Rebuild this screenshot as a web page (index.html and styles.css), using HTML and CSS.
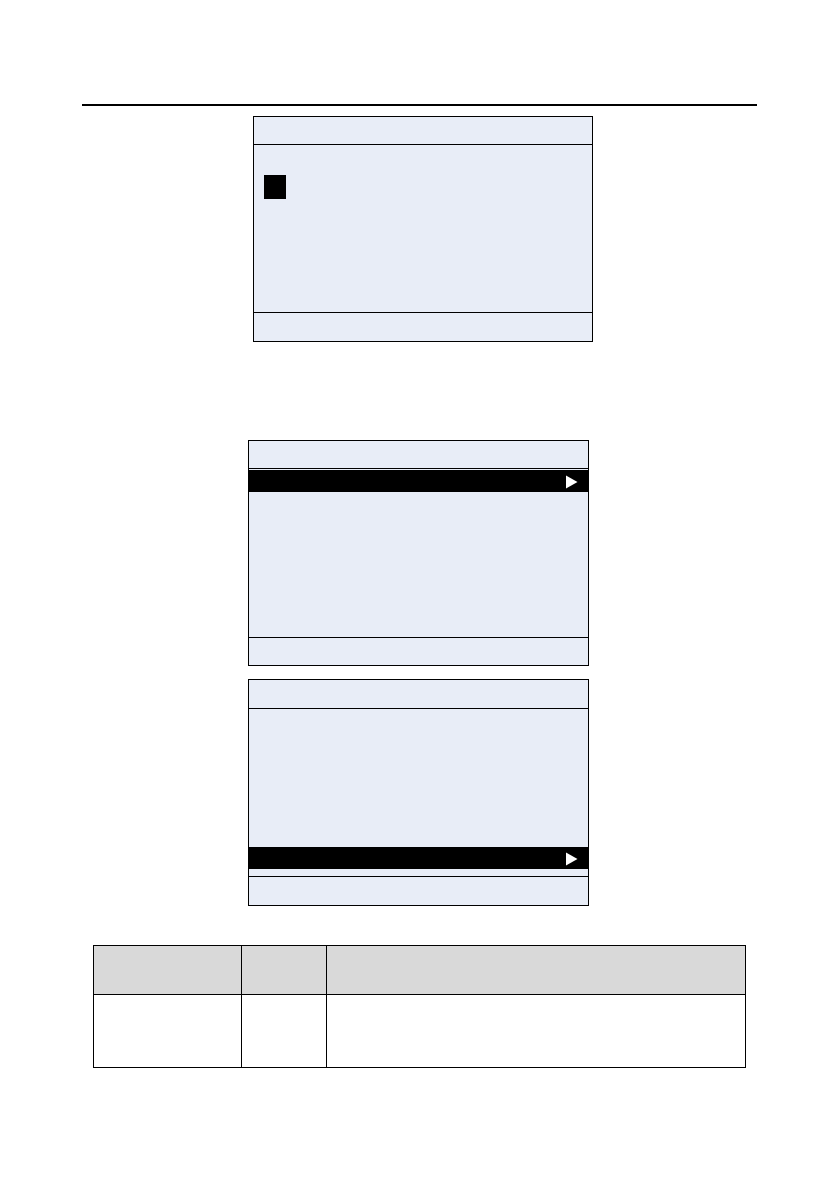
FILE: index.html
```html
<!DOCTYPE html>
<html lang="en">
<head>
<meta charset="utf-8">
<meta name="viewport" content="width=device-width, initial-scale=1">
<link rel="stylesheet" href="styles.css">
</head>
<body>
<header class="page-header"></header>
<main class="content">
  <section class="figure figure-entry">
    <div class="screen">
      <div class="screen-bar"></div>
      <div class="screen-body screen-body-entry"><div class="cursor"></div></div>
      <div class="screen-bar screen-footer"></div>
    </div>
  </section>
  <section class="figure figure-menus">
    <div class="screen screen-menu">
      <div class="screen-bar"></div>
      <div class="screen-body screen-body-first">
        <div class="selected-row">
          <svg class="arrow" viewBox="0 0 12 14" aria-hidden="true"><path d="M0 0.5L11.5 7L0 13.5Z" fill="#fff"/></svg>
        </div>
      </div>
      <div class="screen-bar screen-footer-short"></div>
    </div>
    <div class="screen screen-menu">
      <div class="screen-bar screen-bar-tall"></div>
      <div class="screen-body screen-body-last">
        <div class="selected-row">
          <svg class="arrow" viewBox="0 0 12 14" aria-hidden="true"><path d="M0 0.5L11.5 7L0 13.5Z" fill="#fff"/></svg>
        </div>
      </div>
      <div class="screen-bar screen-footer"></div>
    </div>
  </section>
  <div class="table-wrap">
    <table class="params">
      <colgroup><col class="col-name"><col class="col-range"><col></colgroup>
      <thead><tr><th></th><th></th><th></th></tr></thead>
      <tbody><tr><td></td><td></td><td></td></tr></tbody>
    </table>
  </div>
</main>
</body>
</html>
```

FILE: styles.css
```css
* {
  box-sizing: border-box;
}

body {
  margin: 0;
  padding: 0 82px 123px;
  background: #fff;
  font-family: "Liberation Sans", Arial, sans-serif;
}

.page-header {
  height: 106px;
  border-bottom: 2px solid #000;
}

.content {
  padding-top: 10px;
}

.figure {
  display: flex;
  flex-direction: column;
  align-items: center;
  gap: 13px;
}

.figure-entry {
  padding-left: 7px;
}

.figure-menus {
  padding-right: 2px;
  margin: 98px 0 39px;
}

.screen {
  width: 100%;
  max-width: 340px;
  border: 1px solid #000;
  background: #e8edf7;
}

.screen-menu {
  max-width: 341px;
}

.screen-bar {
  height: 27px;
}

.screen-bar-tall,
.screen-footer {
  height: 28px;
}

.screen-footer-short {
  height: 27px;
}

.screen-body {
  display: flex;
  flex-direction: column;
  height: 169px;
  border-top: 1px solid #000;
  border-bottom: 1px solid #000;
}

.screen-body-entry {
  padding: 30px 10px;
}

.screen-body-first {
  height: 170px;
  padding-top: 1px;
}

.screen-body-last {
  justify-content: flex-end;
  padding-bottom: 7px;
}

.cursor {
  width: 22px;
  height: 24px;
  background: #000;
}

.selected-row {
  display: flex;
  align-items: center;
  justify-content: flex-end;
  height: 22px;
  padding: 1px 10px 0 0;
  background: #000;
}

.arrow {
  width: 12px;
  height: 14px;
}

.table-wrap {
  padding: 0 11px;
}

.params {
  width: 100%;
  table-layout: fixed;
  border-collapse: collapse;
}

.params th,
.params td {
  padding: 0;
  border: 1px solid #000;
}

.params th {
  height: 49px;
  background: #d9d9d9;
}

.params td {
  height: 73px;
}

.col-name {
  width: 148px;
}

.col-range {
  width: 85px;
}
```
